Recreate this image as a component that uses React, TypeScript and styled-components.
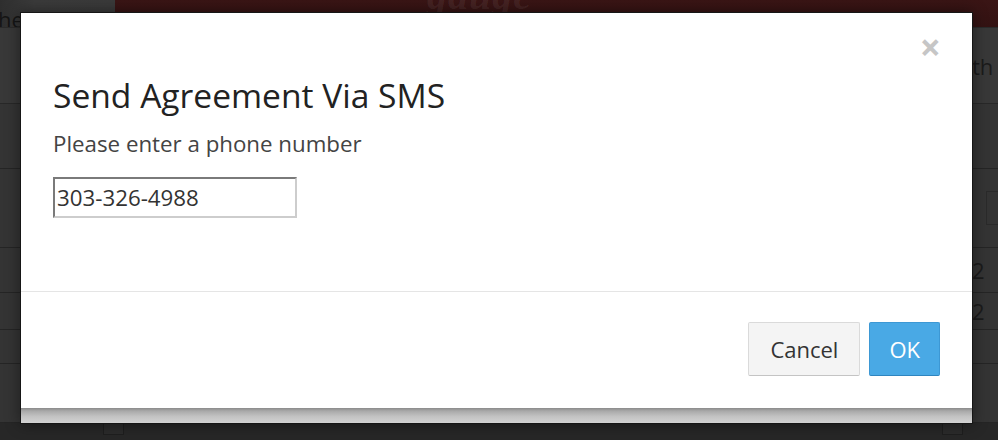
import React from "react";
import styled, { createGlobalStyle } from "styled-components";

const GlobalStyle = createGlobalStyle`
  html, body { margin: 0; padding: 0; }
  body {
    background: #333333;
    font-family: "Open Sans", "Liberation Sans", sans-serif;
    overflow: hidden;
  }
  * { box-sizing: border-box; }
`;

/* ---------- dimmed page behind the dialog ---------- */

const Page = styled.div`
  position: relative;
  width: 998px;
  height: 440px;
  overflow: hidden;
  background: #343434;
  display: flex;
  flex-direction: column;
`;

const TopBar = styled.div`
  height: 28px;
  flex: none;
  display: grid;
  grid-template-columns: 115px 1fr;
  border-bottom: 1px solid #2a2a2a;
`;

const BrandTab = styled.div`
  background: linear-gradient(90deg, #2e2e2e 0%, #3b3b3b 30%, #3a3a3a 100%);
  color: #151515;
  font-size: 22px;
  line-height: 39px;
  overflow: hidden;
  white-space: nowrap;
  span { margin-left: -2px; }
`;

const BrandBand = styled.div`
  background: linear-gradient(180deg, #3a1515 0%, #331212 100%);
  overflow: hidden;
  padding-left: 312px;
`;

const Logo = styled.span`
  display: block;
  font-family: "Liberation Serif", serif;
  font-style: italic;
  font-weight: 700;
  font-size: 40px;
  line-height: 1;
  margin-top: -24px;
  color: rgba(255, 255, 255, 0.07);
  letter-spacing: 1px;
`;

const Rows = styled.div`
  flex: 1;
  display: flex;
  flex-direction: column;
`;

const Row = styled.div<{ $h: number; $bg?: string }>`
  height: ${(p) => p.$h}px;
  flex: none;
  display: flex;
  justify-content: flex-end;
  align-items: center;
  background: ${(p) => p.$bg || "transparent"};
  border-bottom: 1px solid rgba(0, 0, 0, 0.28);
  overflow: hidden;
`;

const RowText = styled.span`
  font-size: 22px;
  color: #1b1b1b;
  white-space: nowrap;
  width: 26px;
  overflow: hidden;
`;

const GhostBox = styled.span`
  width: 12px;
  height: 34px;
  border: 1px solid #2a2a2a;
  border-right: none;
`;

const BottomBar = styled.div`
  height: 17px;
  flex: none;
  background: #272727;
  display: flex;
  align-items: flex-start;
  padding-left: 103px;
`;

const PagerBox = styled.span<{ $ml?: number }>`
  width: 21px;
  height: 12px;
  margin-left: ${(p) => p.$ml || 0}px;
  border: 1px solid #1e1e1e;
  border-top: none;
  background: #2b2b2b;
`;

/* ---------- the dialog ---------- */

const Modal = styled.div`
  position: absolute;
  left: 20px;
  top: 12px;
  width: 953px;
  border: 1px solid #161616;
  background: #ffffff;
  box-shadow: 0 0 14px rgba(0, 0, 0, 0.45);
  display: flex;
  flex-direction: column;
`;

const Body = styled.div`
  padding: 4px 32px 73px 32px;
  display: flex;
  flex-direction: column;
  align-items: flex-start;
`;

const CloseRow = styled.div`
  align-self: stretch;
  height: 58px;
  display: flex;
  justify-content: flex-end;
  align-items: center;
`;

const CloseButton = styled.button`
  border: none;
  background: none;
  padding: 0;
  margin-right: -1px;
  font-family: "Open Sans", "Liberation Sans", sans-serif;
  font-weight: 700;
  font-size: 37px;
  line-height: 1;
  color: #c6c6c6;
  cursor: pointer;
`;

const Title = styled.h3`
  margin: 0;
  font-size: 33.6px;
  font-weight: 400;
  line-height: 40px;
  color: #222222;
`;

const Prompt = styled.p`
  margin: 14px 0 18px 0;
  font-size: 22.3px;
  line-height: 30px;
  color: #444444;
`;

const PhoneInput = styled.input`
  width: 244px;
  height: 41px;
  padding: 0 2px;
  margin: 0;
  border-style: solid;
  border-width: 2px;
  border-color: #7a7a7a #cdcdcd #cdcdcd #7a7a7a;
  font-family: "Open Sans", "Liberation Sans", sans-serif;
  font-size: 22.3px;
  color: #333333;
  background: #ffffff;
  outline: none;
`;

const Footer = styled.div`
  border-top: 1px solid #e5e5e5;
  padding: 30px 32px 32px 31px;
  display: flex;
  justify-content: flex-end;
  gap: 9px;
`;

const Button = styled.button<{ $primary?: boolean }>`
  height: 54px;
  padding: 0 ${(p) => (p.$primary ? 19 : 21)}px;
  border-radius: 2px;
  border: 1px solid ${(p) => (p.$primary ? "#3d98d4" : "#dadada")};
  border-bottom-color: ${(p) => (p.$primary ? "#2f85bf" : "#c4c4c4")};
  background: ${(p) => (p.$primary ? "#49a9e5" : "#f4f4f4")};
  color: ${(p) => (p.$primary ? "#ffffff" : "#333333")};
  font-family: "Open Sans", "Liberation Sans", sans-serif;
  font-size: 22px;
  line-height: 1;
  cursor: pointer;
`;

const BottomShade = styled.div`
  height: 15px;
  background: linear-gradient(
    180deg,
    #8a8a8a 0%,
    #a9a9a9 20%,
    #c2c2c2 55%,
    #d3d3d3 100%
  );
`;

export default function App() {
  return (
    <>
      <GlobalStyle />
      <Page>
        <TopBar>
          <BrandTab>
            <span>he</span>
          </BrandTab>
          <BrandBand>
            <Logo>gauge</Logo>
          </BrandBand>
        </TopBar>
        <Rows>
          <Row $h={76} $bg="#383838">
            <RowText>th</RowText>
          </Row>
          <Row $h={65} />
          <Row $h={79}>
            <GhostBox />
          </Row>
          <Row $h={45}>
            <RowText>2</RowText>
          </Row>
          <Row $h={37}>
            <RowText>2</RowText>
          </Row>
          <Row $h={34} />
          <Row $h={59} />
        </Rows>
        <BottomBar>
          <PagerBox />
          <PagerBox $ml={818} />
        </BottomBar>

        <Modal role="dialog" aria-labelledby="sms-title">
          <Body>
            <CloseRow>
              <CloseButton aria-label="Close">×</CloseButton>
            </CloseRow>
            <Title id="sms-title">Send Agreement Via SMS</Title>
            <Prompt>Please enter a phone number</Prompt>
            <PhoneInput type="text" defaultValue="303-326-4988" />
          </Body>
          <Footer>
            <Button>Cancel</Button>
            <Button $primary>OK</Button>
          </Footer>
          <BottomShade />
        </Modal>
      </Page>
    </>
  );
}
